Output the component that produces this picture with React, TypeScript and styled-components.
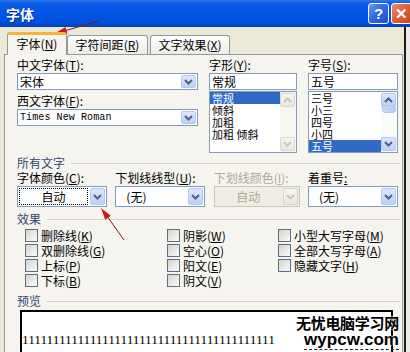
import React from 'react';
import styled, { createGlobalStyle, css } from 'styled-components';

const GlobalStyle = createGlobalStyle`
  html, body { margin: 0; padding: 0; background: #fff; }
  body {
    font-family: "Noto Sans CJK SC", "Noto Sans", sans-serif;
    font-size: 12px;
    color: #000;
  }
  * { box-sizing: border-box; }
`;

const Page = styled.div`
  position: relative;
  width: 410px;
  height: 352px;
  overflow: hidden;
  display: flex;
  flex-direction: column;
  background: #ece9d8;
`;

const TitleBar = styled.div`
  height: 27px;
  flex: none;
  display: flex;
  align-items: center;
  justify-content: space-between;
  padding-left: 6px;
  background: linear-gradient(to bottom, #2f78ec 0%, #0a5ce8 12%, #0055e5 50%, #0050dc 85%, #003fb8 100%);
`;

const Title = styled.span`
  color: #fff;
  font-weight: bold;
  font-size: 14px;
  line-height: 16px;
  text-shadow: 1px 1px 0 #0a2a8c;
`;

const Caps = styled.div`
  display: flex;
  gap: 2px;
  margin-right: -2px;
`;

const CapButton = styled.div<{ $close?: boolean }>`
  width: 21px;
  height: 21px;
  border: 1px solid #fff;
  border-radius: 3px;
  display: flex;
  align-items: center;
  justify-content: center;
  color: #fff;
  font-family: "Liberation Sans", sans-serif;
  font-weight: bold;
  font-size: 15px;
  background: ${(p) =>
    p.$close
      ? 'linear-gradient(135deg, #f0906a 0%, #e0603a 45%, #c8431d 100%)'
      : 'linear-gradient(135deg, #6a9ef8 0%, #2f6ae6 45%, #1a4fd0 100%)'};
`;

const Frame = styled.div`
  flex: 1;
  display: flex;
  min-height: 0;
`;

const Dialog = styled.div`
  width: 404px;
  display: flex;
  flex-direction: column;
  padding-top: 5px;
`;

const Edge = styled.div`
  width: 2px;
  background: #1a1a1a;
`;

const Outside = styled.div`
  flex: 1;
  background: #ecebe6;
`;

const TabRow = styled.div`
  height: 22px;
  display: flex;
  align-items: flex-end;
  padding-left: 7px;
  position: relative;
  z-index: 1;
`;

const Tab = styled.div<{ $active?: boolean; $w: number }>`
  width: ${(p) => p.$w}px;
  height: 19px;
  border: 1px solid #919b9c;
  border-bottom: none;
  border-radius: 3px 3px 0 0;
  display: flex;
  align-items: center;
  justify-content: center;
  line-height: 14px;
  margin-right: 2px;
  background: linear-gradient(to bottom, #fefefe, #ecebe6);
  ${(p) =>
    p.$active &&
    css`
      height: 23px;
      margin-bottom: -1px;
      margin-right: 0;
      border-top: 3px solid #f5b342;
      background: #f5f4ee;
      padding-bottom: 2px;
    `}
`;

const Panel = styled.div`
  margin-left: 4px;
  width: 399px;
  flex: 1;
  border: 1px solid #919b9c;
  border-bottom: none;
  background: #f5f4ee;
  padding: 3px 4px 0 12px;
`;

const Label = styled.div<{ $disabled?: boolean }>`
  height: 14px;
  line-height: 14px;
  white-space: nowrap;
  color: ${(p) => (p.$disabled ? '#aca899' : '#000')};
`;

const TopGrid = styled.div`
  display: grid;
  grid-template-columns: 181px 88px 90px;
  column-gap: 11px;
`;

const Column = styled.div`
  display: flex;
  flex-direction: column;
`;

const TextBox = styled.div<{ $mono?: boolean; $gap?: number }>`
  margin-top: 1px;
  margin-bottom: ${(p) => p.$gap ?? 0}px;
  height: 17px;
  border: 1px solid #7f9db9;
  background: #fff;
  display: flex;
  align-items: center;
  padding-left: 2px;
  line-height: 14px;
  ${(p) =>
    p.$mono &&
    css`
      font-family: "Liberation Mono", "DejaVu Sans Mono", monospace;
      font-size: 10px;
      letter-spacing: 0.1px;
    `}
`;

const BoxText = styled.span`
  flex: 1;
`;

const ArrowBtn = styled.div<{ $disabled?: boolean; $h?: number }>`
  width: 15px;
  height: ${(p) => p.$h ?? 13}px;
  margin-right: 1px;
  border: 1px solid ${(p) => (p.$disabled ? '#d8d6cc' : '#b4c8f2')};
  border-radius: 2px;
  display: flex;
  align-items: center;
  justify-content: center;
  background: ${(p) =>
    p.$disabled
      ? 'linear-gradient(to bottom, #f6f5f0, #e9e7dd)'
      : 'linear-gradient(to bottom, #dce7fe, #bccffa)'};
`;

const ListBox = styled.div`
  margin-top: 1px;
  height: 62px;
  border: 1px solid #7f9db9;
  background: #fff;
  display: grid;
  grid-template-columns: 1fr 16px;
  overflow: hidden;
`;

const Items = styled.div`
  display: flex;
  flex-direction: column;
`;

const Item = styled.div<{ $sel?: boolean }>`
  height: 12px;
  line-height: 12px;
  font-size: 11px;
  padding-left: 2px;
  white-space: pre;
  ${(p) =>
    p.$sel &&
    css`
      background: #316ac5;
      color: #fff;
    `}
`;

const ScrollBar = styled.div<{ $disabled?: boolean }>`
  display: flex;
  flex-direction: column;
  justify-content: space-between;
  align-items: center;
  padding: 1px 0;
  background: ${(p) => (p.$disabled ? '#f7f6f1' : '#fbfbf8')};
`;

const Thumb = styled.div`
  width: 14px;
  height: 8px;
  margin-top: -26px;
  border: 1px solid #b4c8f2;
  border-radius: 3px;
  background: linear-gradient(to right, #cad8f9, #b6cbf7);
`;

const GroupHead = styled.div<{ $top: number }>`
  margin-top: ${(p) => p.$top}px;
  height: 14px;
  line-height: 14px;
  display: flex;
  align-items: center;
  color: #34456e;
  &::after {
    content: '';
    flex: 1;
    margin-left: 6px;
    margin-right: -2px;
    border-top: 1px solid #d6d3c4;
  }
`;

const ComboGrid = styled.div`
  margin-top: 1px;
  display: grid;
  grid-template-columns: 90px 90px 86px 90px;
  justify-content: space-between;
`;

const Combo = styled.div<{ $disabled?: boolean }>`
  margin-top: 1px;
  height: 21px;
  border: 1px solid ${(p) => (p.$disabled ? '#c9c7ba' : '#7f9db9')};
  background: ${(p) => (p.$disabled ? '#efede4' : '#fff')};
  color: ${(p) => (p.$disabled ? '#aca899' : '#000')};
  display: flex;
  align-items: center;
  padding-left: 1px;
  line-height: 14px;
`;

const ComboText = styled.span<{ $center?: boolean; $focus?: boolean }>`
  flex: 1;
  height: 17px;
  display: flex;
  align-items: center;
  justify-content: ${(p) => (p.$center ? 'center' : 'flex-start')};
  padding-left: ${(p) => (p.$center ? 0 : 8)}px;
  margin-right: 2px;
  border: 1px dotted ${(p) => (p.$focus ? '#000' : 'transparent')};
`;

const CheckGrid = styled.div`
  margin-top: 2px;
  padding-left: 8px;
  display: grid;
  grid-template-columns: 142px 111px auto;
  grid-auto-rows: 15px;
`;

const Check = styled.div`
  display: flex;
  align-items: center;
  gap: 3px;
  line-height: 14px;
  white-space: nowrap;
`;

const CheckBox = styled.span`
  width: 13px;
  height: 13px;
  border: 1px solid #5a6f86;
  background: linear-gradient(135deg, #d4d4ce 0%, #ecebe6 60%, #fafaf8 100%);
`;

const Preview = styled.div`
  margin-top: 2px;
  margin-left: 3px;
  width: 373px;
  height: 50px;
  border: 2px solid #000;
  border-bottom: none;
  background: #fff;
  padding-top: 20px;
`;

const PreviewText = styled.div`
  white-space: nowrap;
  font-family: "Liberation Serif", serif;
  font-size: 13.3px;
  line-height: 16px;
`;

const Watermark = styled.div`
  position: absolute;
  left: 296px;
  top: 313px;
  display: flex;
  flex-direction: column;
  align-items: flex-end;
  font-weight: bold;
  text-shadow: 0 0 2px #fff, 0 0 2px #fff;
`;

const MarkCn = styled.div`
  font-size: 15px;
  line-height: 19px;
  letter-spacing: -0.3px;
`;

const MarkEn = styled.div`
  font-family: "Liberation Sans", sans-serif;
  font-size: 17px;
  line-height: 15px;
  padding-bottom: 2px;
  border-bottom: 1px dashed #222;
`;

const Overlay = styled.svg`
  position: absolute;
  left: 0;
  top: 0;
  pointer-events: none;
`;

const Chevron = ({ color = '#4d6185', up = false }: { color?: string; up?: boolean }) => (
  <svg width="9" height="6" viewBox="0 0 9 6">
    <path d={up ? 'M1 5 L4.5 1.5 L8 5' : 'M1 1 L4.5 4.5 L8 1'} stroke={color} strokeWidth="2" fill="none" />
  </svg>
);

const checks: [string, string][] = [
  ['删除线', 'K'], ['阴影', 'W'], ['小型大写字母', 'M'],
  ['双删除线', 'G'], ['空心', 'O'], ['全部大写字母', 'A'],
  ['上标', 'P'], ['阳文', 'E'], ['隐藏文字', 'H'],
  ['下标', 'B'], ['阴文', 'V'],
];

const Mn = ({ k }: { k: string }) => (
  <>
    (<u>{k}</u>)
  </>
);

export default function App() {
  return (
    <>
      <GlobalStyle />
      <Page>
        <TitleBar>
          <Title>字体</Title>
          <Caps>
            <CapButton>?</CapButton>
            <CapButton $close>✕</CapButton>
          </Caps>
        </TitleBar>
        <Frame>
          <Dialog>
            <TabRow>
              <Tab $active $w={60}>字体<Mn k="N" /></Tab>
              <Tab $w={81}>字符间距<Mn k="R" /></Tab>
              <Tab $w={80}>文字效果<Mn k="X" /></Tab>
            </TabRow>
            <Panel>
              <TopGrid>
                <Column>
                  <Label>中文字体<Mn k="T" />:</Label>
                  <TextBox $gap={4}>
                    <BoxText>宋体</BoxText>
                    <ArrowBtn><Chevron /></ArrowBtn>
                  </TextBox>
                  <Label>西文字体<Mn k="F" />:</Label>
                  <TextBox $mono>
                    <BoxText>Times New Roman</BoxText>
                    <ArrowBtn><Chevron /></ArrowBtn>
                  </TextBox>
                </Column>
                <Column>
                  <Label>字形<Mn k="Y" />:</Label>
                  <TextBox>常规</TextBox>
                  <ListBox>
                    <Items>
                      <Item $sel>常规</Item>
                      <Item>倾斜</Item>
                      <Item>加粗</Item>
                      <Item>{'加粗 倾斜'}</Item>
                    </Items>
                    <ScrollBar $disabled>
                      <ArrowBtn $disabled $h={14}><Chevron up color="#c8c6bc" /></ArrowBtn>
                      <ArrowBtn $disabled $h={14}><Chevron color="#c8c6bc" /></ArrowBtn>
                    </ScrollBar>
                  </ListBox>
                </Column>
                <Column>
                  <Label>字号<Mn k="S" />:</Label>
                  <TextBox>五号</TextBox>
                  <ListBox>
                    <Items>
                      <Item>三号</Item>
                      <Item>小三</Item>
                      <Item>四号</Item>
                      <Item>小四</Item>
                      <Item $sel>五号</Item>
                    </Items>
                    <ScrollBar>
                      <ArrowBtn $h={14}><Chevron up /></ArrowBtn>
                      <Thumb />
                      <ArrowBtn $h={14}><Chevron /></ArrowBtn>
                    </ScrollBar>
                  </ListBox>
                </Column>
              </TopGrid>

              <GroupHead $top={3}>所有文字</GroupHead>
              <ComboGrid>
                <Column>
                  <Label>字体颜色<Mn k="C" />:</Label>
                  <Combo>
                    <ComboText $center $focus>自动</ComboText>
                    <ArrowBtn $h={17}><Chevron /></ArrowBtn>
                  </Combo>
                </Column>
                <Column>
                  <Label>下划线线型<Mn k="U" />:</Label>
                  <Combo>
                    <ComboText>(无)</ComboText>
                    <ArrowBtn $h={17}><Chevron /></ArrowBtn>
                  </Combo>
                </Column>
                <Column>
                  <Label $disabled>下划线颜色<Mn k="I" />:</Label>
                  <Combo $disabled>
                    <ComboText $center>自动</ComboText>
                    <ArrowBtn $disabled $h={17}><Chevron color="#c8c6bc" /></ArrowBtn>
                  </Combo>
                </Column>
                <Column>
                  <Label>着重号<u>:</u></Label>
                  <Combo>
                    <ComboText>(无)</ComboText>
                    <ArrowBtn $h={17}><Chevron /></ArrowBtn>
                  </Combo>
                </Column>
              </ComboGrid>

              <GroupHead $top={5}>效果</GroupHead>
              <CheckGrid>
                {checks.map(([t, k]) => (
                  <Check key={t}>
                    <CheckBox />
                    <span>{t}<Mn k={k} /></span>
                  </Check>
                ))}
              </CheckGrid>

              <GroupHead $top={6}>预览</GroupHead>
              <Preview>
                <PreviewText>{'1'.repeat(41)}</PreviewText>
              </Preview>
            </Panel>
          </Dialog>
          <Edge />
          <Outside />
        </Frame>

        <Watermark>
          <MarkCn>无忧电脑学习网</MarkCn>
          <MarkEn>wypcw.com</MarkEn>
        </Watermark>

        <Overlay width="410" height="352" viewBox="0 0 410 352">
          <line x1="99" y1="21" x2="64" y2="31" stroke="#7a1a1a" strokeWidth="1" />
          <polygon points="54,34 67.5,33.8 65.5,27" fill="#d01818" />
          <line x1="124" y1="240" x2="107" y2="216" stroke="#7a1a1a" strokeWidth="1" />
          <polygon points="101,208 110.8,215.7 105.2,219.7" fill="#d01818" />
        </Overlay>
      </Page>
    </>
  );
}
